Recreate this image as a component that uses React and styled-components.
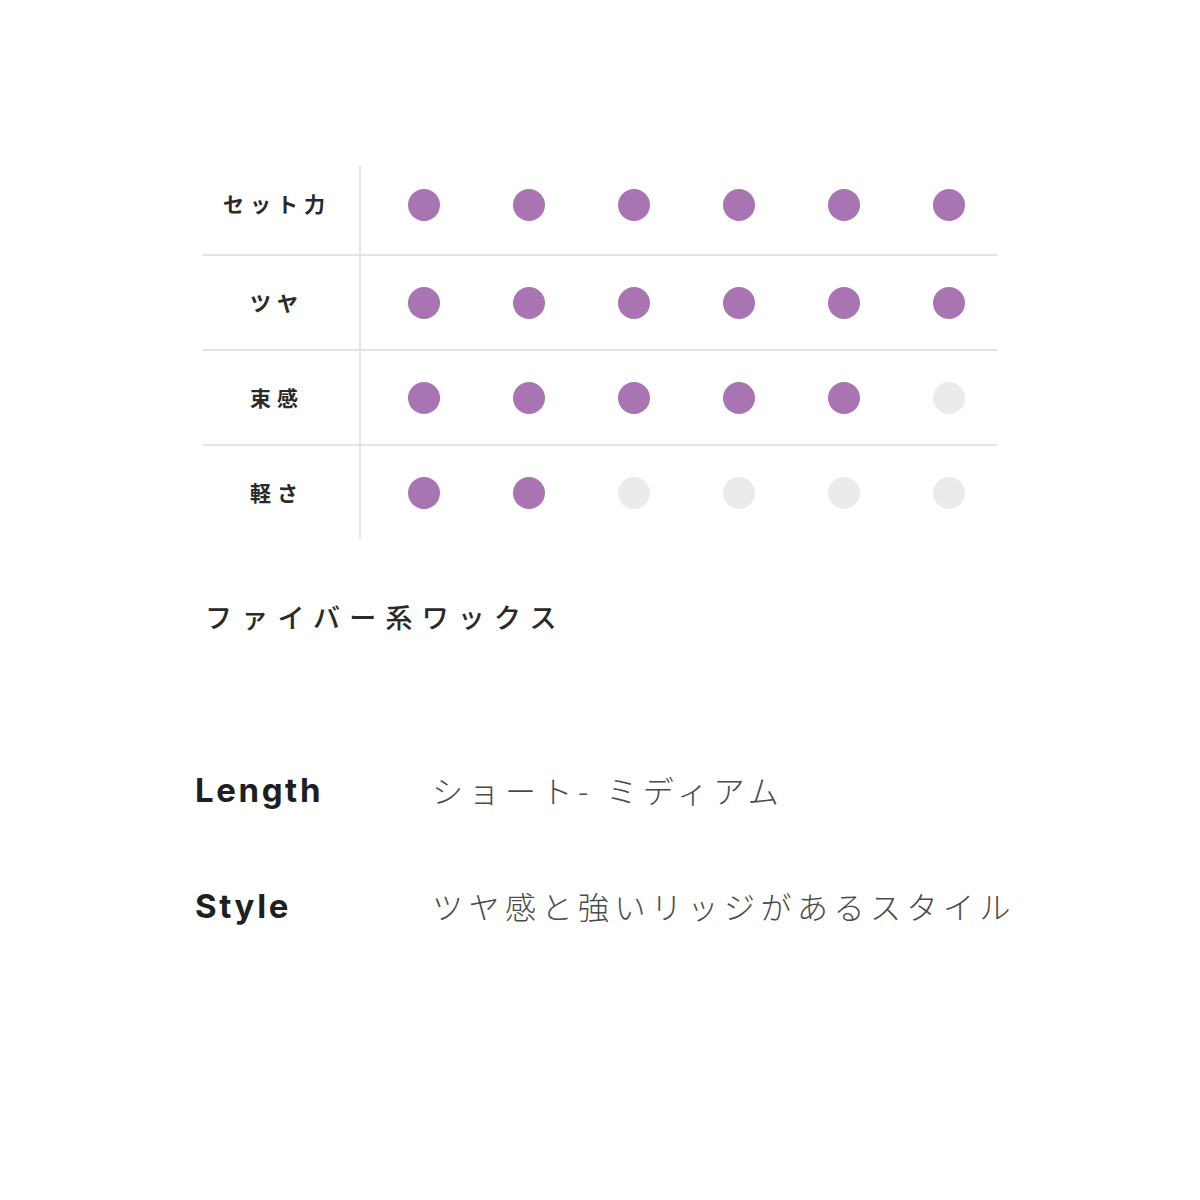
import React from 'react';
import styled, { createGlobalStyle } from 'styled-components';

const GlobalStyle = createGlobalStyle`
  body {
    margin: 0;
    background: #ffffff;
    font-family: "Noto Sans CJK JP", "Noto Sans", sans-serif;
  }
`;

const Page = styled.div`
  width: 1200px;
  min-height: 1200px;
  padding-top: 166px;
  box-sizing: border-box;
`;

const Chart = styled.div`
  margin-left: 203px;
  width: 794px;
  display: flex;
  flex-direction: column;
`;

const Row = styled.div`
  display: flex;
  height: ${({ $first }) => ($first ? '88px' : '95px')};
  padding-bottom: ${({ $first }) => ($first ? '10px' : '0')};
  border-top: ${({ $first }) => ($first ? 'none' : '2px solid #e4e4e4')};
  box-sizing: border-box;
`;

const Label = styled.div`
  width: 158px;
  flex-shrink: 0;
  display: flex;
  align-items: center;
  justify-content: center;
  padding-right: 8px;
  padding-bottom: ${({ $first }) => ($first ? '14px' : '2px')};
  box-sizing: border-box;
  border-right: 2px solid #e4e4e4;
  margin-bottom: ${({ $first }) => ($first ? '-10px' : '0')};
  font-family: "Noto Sans CJK JP", serif;
  font-weight: 700;
  font-size: 21px;
  letter-spacing: 6px;
  color: #2a2a2a;
`;

const Dots = styled.div`
  flex: 1;
  min-width: 0;
  display: flex;
  align-items: center;
  padding-left: 10px;
`;

const Cell = styled.div`
  width: 105px;
  flex-shrink: 0;
  display: flex;
  justify-content: center;
`;

const Dot = styled.span`
  width: 32px;
  height: 32px;
  border-radius: 50%;
  background: ${({ $on }) => ($on ? '#a874b1' : '#ebebeb')};
`;

const Heading = styled.h2`
  margin: 58px 0 0 205px;
  font-family: "Noto Sans CJK JP", serif;
  font-weight: 500;
  font-size: 27px;
  letter-spacing: 9.2px;
  color: #2a2a2a;
  line-height: 40px;
`;

const Specs = styled.div`
  margin: 132px 0 0 195px;
  display: grid;
  grid-template-columns: 237px 1fr;
  row-gap: 74px;
  align-items: center;
`;

const SpecName = styled.div`
  font-family: Inter, "Liberation Sans", sans-serif;
  font-weight: 700;
  font-size: 33px;
  letter-spacing: 2.6px;
  color: #1f1f1f;
  line-height: 42px;
`;

const SpecValue = styled.div`
  font-family: "Noto Sans CJK JP", sans-serif;
  font-weight: 300;
  font-size: 31px;
  letter-spacing: 5.5px;
  color: #4a4a4a;
  line-height: 42px;
`;

const ratings = [
  { name: 'セット力', value: 6 },
  { name: 'ツヤ', value: 6 },
  { name: '束感', value: 5 },
  { name: '軽さ', value: 2 },
];

const specs = [
  { name: 'Length', value: 'ショート- ミディアム' },
  { name: 'Style', value: 'ツヤ感と強いリッジがあるスタイル' },
];

const App = () => {
  return (
    <Page>
      <GlobalStyle />
      <Chart>
        {ratings.map((r, i) => (
          <Row key={r.name} $first={i === 0}>
            <Label $first={i === 0}>{r.name}</Label>
            <Dots>
              {[0, 1, 2, 3, 4, 5].map((n) => (
                <Cell key={n}>
                  <Dot $on={n < r.value} />
                </Cell>
              ))}
            </Dots>
          </Row>
        ))}
      </Chart>
      <Heading>ファイバー系ワックス</Heading>
      <Specs>
        {specs.map((s) => (
          <React.Fragment key={s.name}>
            <SpecName>{s.name}</SpecName>
            <SpecValue>{s.value}</SpecValue>
          </React.Fragment>
        ))}
      </Specs>
    </Page>
  );
};

export default App;
